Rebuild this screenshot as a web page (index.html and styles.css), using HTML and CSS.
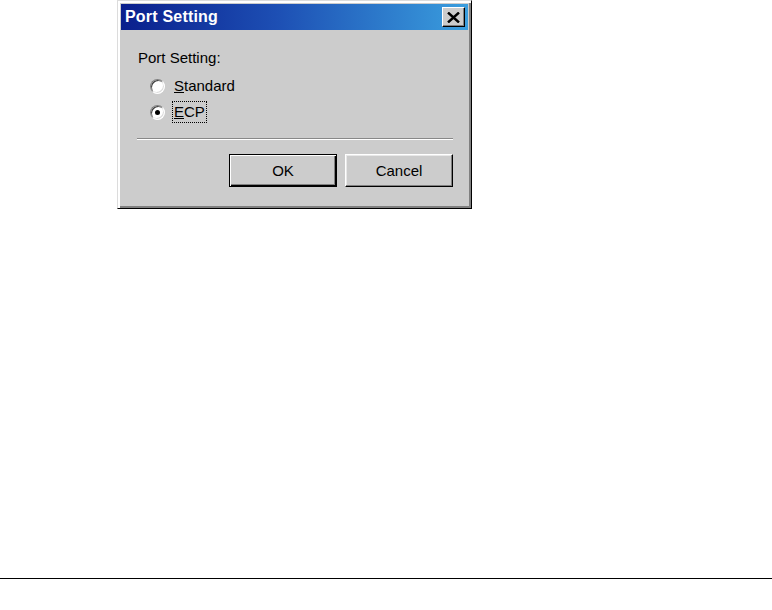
FILE: index.html
```html
<!DOCTYPE html>
<html>
<head>
<meta charset="utf-8">
<title>Port Setting</title>
<link rel="stylesheet" href="styles.css">
</head>
<body>
<div class="page">
  <div class="dialog">
    <div class="titlebar">
      <span class="title">Port Setting</span>
      <span class="close-btn">
        <svg width="13" height="11" viewBox="0 0 13 11"><path d="M1 0.5 L12 10.5 M12 0.5 L1 10.5" stroke="#000" stroke-width="2.4" fill="none"/></svg>
      </span>
    </div>
    <div class="content">
      <div class="label">Port Setting:</div>
      <div class="radios">
        <div class="radio-row"><span class="radio"></span><span class="radio-text"><u>S</u>tandard</span></div>
        <div class="radio-row"><span class="radio checked"></span><span class="radio-text focus"><u>E</u>CP</span></div>
      </div>
      <div class="separator"></div>
      <div class="buttons">
        <span class="btn default"><span class="btn-inner">OK</span></span>
        <span class="btn"><span class="btn-inner">Cancel</span></span>
      </div>
    </div>
  </div>
  <div class="rule"></div>
</div>
</body>
</html>
```
FILE: styles.css
```css
html, body {
  margin: 0;
  padding: 0;
  background: #ffffff;
}
.page {
  height: 610px;
  display: flex;
  flex-direction: column;
  font-family: "Liberation Sans", Arial, sans-serif;
}
.dialog {
  margin-left: 117px;
  width: 355px;
  box-sizing: border-box;
  background: #cccccc;
  border: 1px solid;
  border-color: #dcdcdc #000000 #000000 #dcdcdc;
  box-shadow: inset 2px 2px 0 #ffffff, inset -2px -2px 0 #808080;
  padding: 3px 3px 3px 3px;
}
.titlebar {
  height: 26px;
  background: linear-gradient(90deg, #0a1f8c 0%, #1d4fb4 45%, #3a9ede 100%);
  display: flex;
  align-items: center;
  justify-content: space-between;
  padding: 0 3px 0 4px;
}
.title {
  color: #ffffff;
  font-weight: bold;
  font-size: 16px;
  letter-spacing: 0.2px;
}
.close-btn {
  width: 23px;
  height: 20px;
  box-sizing: border-box;
  background: #cccccc;
  border: 1px solid;
  border-color: #ffffff #000000 #000000 #ffffff;
  box-shadow: inset -1px -1px 0 #808080;
  display: flex;
  align-items: center;
  justify-content: center;
}
.content {
  padding: 19px 15px 18px 16px;
  font-size: 15px;
  color: #000;
}
.label {
  height: 18px;
  line-height: 18px;
  padding-left: 1px;
}
.radios {
  margin-top: 6px;
  padding-left: 13px;
}
.radio-row {
  height: 26px;
  display: flex;
  align-items: center;
}
.radio {
  width: 15px;
  height: 15px;
  box-sizing: border-box;
  border-radius: 50%;
  border: 1px solid;
  border-color: #808080 #ffffff #ffffff #808080;
  box-shadow: inset 1px 1px 0 #404040, inset -1px -1px 0 #dcdcdc;
  background: #ffffff;
  display: flex;
  align-items: center;
  justify-content: center;
}
.radio.checked::after {
  content: "";
  width: 5px;
  height: 5px;
  border-radius: 50%;
  background: #000;
}
.radio-text {
  margin-left: 7px;
  line-height: 18px;
  padding: 1px 1px;
  border: 1px solid transparent;
}
.radio-text.focus {
  border: 1px dotted #000;
}
.separator {
  margin-top: 13px;
  height: 1px;
  background: #888888;
  border-bottom: 1px solid #ffffff;
}
.buttons {
  margin-top: 14px;
  display: flex;
  justify-content: flex-end;
  gap: 8px;
}
.btn {
  width: 108px;
  height: 33px;
  box-sizing: border-box;
  border: 1px solid;
  border-color: #ffffff #000000 #000000 #ffffff;
  box-shadow: inset -1px -1px 0 #808080, inset 1px 1px 0 #e8e8e8;
  display: flex;
}
.btn.default {
  border: 1px solid #000;
  box-shadow: inset 1px 1px 0 #ffffff, inset -1px -1px 0 #000000, inset -2px -2px 0 #808080;
}
.btn-inner {
  flex: 1;
  display: flex;
  align-items: center;
  justify-content: center;
  font-size: 15px;
}
.rule {
  margin-top: auto;
  margin-bottom: 31px;
  height: 1px;
  background: #000000;
}
```
